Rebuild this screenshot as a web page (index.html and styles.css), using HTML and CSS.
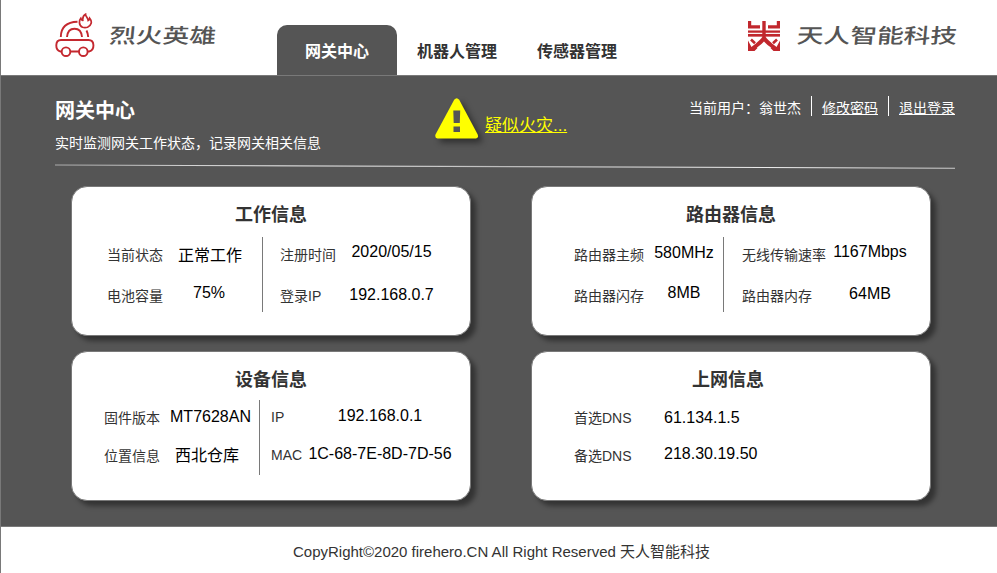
FILE: index.html
```html
<!DOCTYPE html>
<html lang="zh-CN">
<head>
<meta charset="utf-8">
<title>网关中心</title>
<link rel="stylesheet" href="styles.css">
</head>
<body>
<div class="page">
  <header class="header">
    <div class="brand">
      <svg class="car" width="40" height="46" viewBox="0 0 40 46" fill="none" stroke="#c4282f" stroke-width="1.9">
        <path d="M5.800 24C6 14 12 9 22.500 8.800M31.500 17.500Q33 20.500 33.200 24M12 24C12.500 17.500 15.500 15.700 19.500 15.700S26.500 17.500 27 24"/>
        <path d="M6.500 38.500H5.500C-.2 37-.2 27 6 27H33.500C40 27 40 37 34 38.500H33M15.500 38.500H24"/>
        <circle cx="11" cy="38.700" r="4.300"/><circle cx="28.300" cy="38.700" r="4.300"/>
        <path stroke-width="1.700" d="M27.500 14.300C23.500 12.200 24 7.500 25.800 5.300Q26.500 7.500 27.800 7.300C27.500 4 28.500 2.200 30.500 1.200C30.500 3.500 33 4.500 33.200 7.500Q34.500 7 34.700 5.200C37.500 8.500 36.500 12.500 32.500 14.300Q30 15 27.500 14.300Z"/>
      </svg>
      <span class="brand-name">烈火英雄</span>
    </div>
    <nav class="nav">
      <a class="tab tab-active">网关中心</a>
      <a class="tab">机器人管理</a>
      <a class="tab">传感器管理</a>
    </nav>
    <div class="company">
      <svg width="32" height="30" viewBox="0 0 32 30">
        <g fill="none" stroke="#c1272d">
          <path stroke-width="3.200" d="M1.600 0V5.800H12M30.400 0V5.800H20"/>
          <path stroke-width="3.400" d="M16 0V18"/>
          <path stroke-width="2.300" d="M0 10.600H32"/>
          <path stroke-width="2.700" d="M0 14.300H32"/>
          <path stroke-width="2.600" d="M3 18.500L7 22.300M29 18.500L25 22.300"/>
          <path stroke-width="4" d="M16 17C14 21 10 23 4 28M16 17C18 21 22 23 28 28"/>
        </g>
        <path fill="#c1272d" d="M0 19.500L3.500 26H8L9.500 27L6.500 30H0ZM32 19.500L28.500 26H24L22.500 27L25.500 30H32Z"/>
      </svg>
      <span class="brand-name">天人智能科技</span>
    </div>
  </header>

  <main class="main">
    <div class="intro">
      <div class="heading">
        <h1>网关中心</h1>
        <p>实时监测网关工作状态，记录网关相关信息</p>
      </div>
      <a class="alarm">
        <svg width="44" height="42" viewBox="0 0 44 42">
          <path fill="#ff0" d="M19.200 1.800Q21.700-1.200 24.200 1.800L42.700 36.500Q43.800 40 41 40.500H2.500Q-.5 40 .5 36.500Z"/>
          <path fill="#555" d="M18.300 12.500H25.200L24.800 25H18.700ZM18.500 28.500H25V34H18.500Z"/>
        </svg>
        <span>疑似火灾...</span>
      </a>
      <div class="account">
        <span>当前用户：翁世杰</span>
        <a>修改密码</a>
        <a>退出登录</a>
      </div>
    </div>
    <svg class="rule" width="900" height="6" viewBox="0 0 900 6">
      <defs>
        <linearGradient id="fade" gradientUnits="userSpaceOnUse" x1="0" y1="0" x2="900" y2="0">
          <stop offset="0" stop-color="#aaa"/><stop offset=".25" stop-color="#eee"/>
          <stop offset=".5" stop-color="#bbb"/><stop offset=".8" stop-color="#eee"/><stop offset="1" stop-color="#ccc"/>
        </linearGradient>
      </defs>
      <path d="M0 2L900 5.200" stroke="url(#fade)" stroke-width="1.100"/>
    </svg>

    <div class="cards">
      <section class="card work">
        <h2>工作信息</h2>
        <div class="fields">
          <div class="labels"><span>当前状态</span><span>电池容量</span></div>
          <div class="values"><span>正常工作</span><span class="battery">75%</span></div>
          <i class="divider"></i>
          <div class="labels"><span>注册时间</span><span>登录IP</span></div>
          <div class="values second"><span>2020/05/15</span><span>192.168.0.7</span></div>
        </div>
      </section>
      <section class="card router">
        <h2>路由器信息</h2>
        <div class="fields">
          <div class="labels"><span>路由器主频</span><span>路由器闪存</span></div>
          <div class="values"><span>580MHz</span><span>8MB</span></div>
          <i class="divider"></i>
          <div class="labels"><span>无线传输速率</span><span>路由器内存</span></div>
          <div class="values second"><span>1167Mbps</span><span>64MB</span></div>
        </div>
      </section>
      <section class="card device">
        <h2>设备信息</h2>
        <div class="fields">
          <div class="labels"><span>固件版本</span><span>位置信息</span></div>
          <div class="values"><span>MT7628AN</span><span class="place">西北仓库</span></div>
          <i class="divider"></i>
          <div class="labels second"><span>IP</span><span>MAC</span></div>
          <div class="values second"><span>192.168.0.1</span><span>1C-68-7E-8D-7D-56</span></div>
        </div>
      </section>
      <section class="card network">
        <h2>上网信息</h2>
        <div class="fields">
          <div class="labels"><span>首选DNS</span><span>备选DNS</span></div>
          <div class="values"><span>61.134.1.5</span><span>218.30.19.50</span></div>
        </div>
      </section>
    </div>
  </main>

  <footer class="footer">CopyRight©2020 firehero.CN All Right Reserved 天人智能科技</footer>
</div>
</body>
</html>
```
FILE: styles.css
```css
* { box-sizing: border-box; }
body {
  margin: 0;
  font-family: "Liberation Sans", "Noto Sans CJK SC", sans-serif;
  color: #333;
  background: #fff;
  overflow: hidden;
}
h1, h2, p { margin: 0; }
.page { height: 573px; border-left: 1px solid #797979; display: flex; flex-direction: column; }

.header { height: 75px; display: flex; align-items: flex-start; flex: none; }
.brand { display: flex; width: 276px; padding: 13px 0 0 54px; }
.brand-name {
  font-size: 26.7px;
  line-height: 30px;
  font-weight: 500;
  color: #555;
  white-space: nowrap;
  transform: scaleY(.76) skewX(-4deg);
}
.brand .brand-name { margin: 7px 0 0 14px; }
.nav { display: flex; margin-top: 25px; }
.tab {
  width: 120px;
  height: 50px;
  line-height: 54px;
  text-align: center;
  font-size: 16px;
  font-weight: bold;
}
.tab-active { background: #555; color: #fff; border-radius: 10px 10px 0 0; }
.company { display: flex; margin: 21px 0 0 111px; }
.company .brand-name { margin: 0 0 0 17px; }

.main {
  height: 452px;
  flex: none;
  background: #555;
  border-top: 1px solid #797979;
  border-bottom: 1px solid #797979;
}
.intro { display: flex; height: 87px; padding-left: 54px; color: #fff; }
.heading { width: 380px; padding-top: 21px; }
.heading h1 { font-size: 20px; line-height: 28px; }
.heading p { margin-top: 8px; font-size: 14px; line-height: 20px; }
.alarm { display: flex; width: 254px; padding-top: 22px; color: #ff0; font-size: 17px; }
.alarm svg { overflow: visible; filter: drop-shadow(4px 4px 3px rgba(0, 0, 0, .45)); }
.alarm span { margin: 16px 0 0 6px; line-height: 24px; text-decoration: underline; }
.account { display: flex; padding-top: 20px; font-size: 14px; line-height: 24px; white-space: nowrap; }
.account > * { height: 20px; }
.account a { margin-left: 10px; padding-left: 10px; border-left: 1px solid #fff; text-decoration: underline; }
.rule { display: block; margin-left: 54px; }

.cards {
  display: grid;
  grid-template-columns: 400px 400px;
  grid-auto-rows: 150px;
  gap: 15px 60px;
  margin: 17px 0 0 70px;
}
.card {
  border: 1px solid #797979;
  border-radius: 16px;
  background: #fff;
  box-shadow: 5px 5px 5px rgba(0, 0, 0, .4);
}
.card h2 { padding-top: 16px; height: 50px; line-height: 24px; font-size: 18px; text-align: center; }
.fields { display: grid; line-height: 20px; white-space: nowrap; }
.labels, .values { display: flex; flex-direction: column; }
.labels { font-size: 14px; gap: 21px; padding-top: 8px; }
.values { font-size: 16px; color: #000; align-items: center; }
.divider { width: 1px; height: 75px; background: #797979; }

.work .fields { padding-left: 35px; grid-template-columns: 63px 92px 18px 66px 91px; }
.work .values { padding: 9px 12px 0 0; gap: 17px; }
.work .values.second { padding: 5px 0 0; gap: 23px; }
.work .battery { margin-right: 2px; }

.router .fields { padding-left: 42px; grid-template-columns: 75px 74px 19px 88px 80px; }
.router .values { padding: 6px 4px 0 0; gap: 20px; }
.router .values.second { padding: 5px 0 0; gap: 22px; }

.device h2, .network h2 { height: 48px; }
.device .fields { padding-left: 32px; grid-template-columns: 66px 89px 12px 35px 148px; }
.device .labels, .network .labels { gap: 18px; }
.device .labels.second { padding-top: 7px; }
.device .values { padding: 7px 8px 0 0; gap: 19px; }
.device .values.second { padding: 6px 0 0; gap: 18px; }
.device .place { margin-right: 7px; }

.network h2 { padding-right: 6px; }
.network .fields { padding-left: 42px; grid-template-columns: 90px 120px; }
.network .values { align-items: flex-start; padding-top: 8px; gap: 16px; }

.footer { text-align: center; font-size: 15px; line-height: 50px; padding-left: 5px; }
```
